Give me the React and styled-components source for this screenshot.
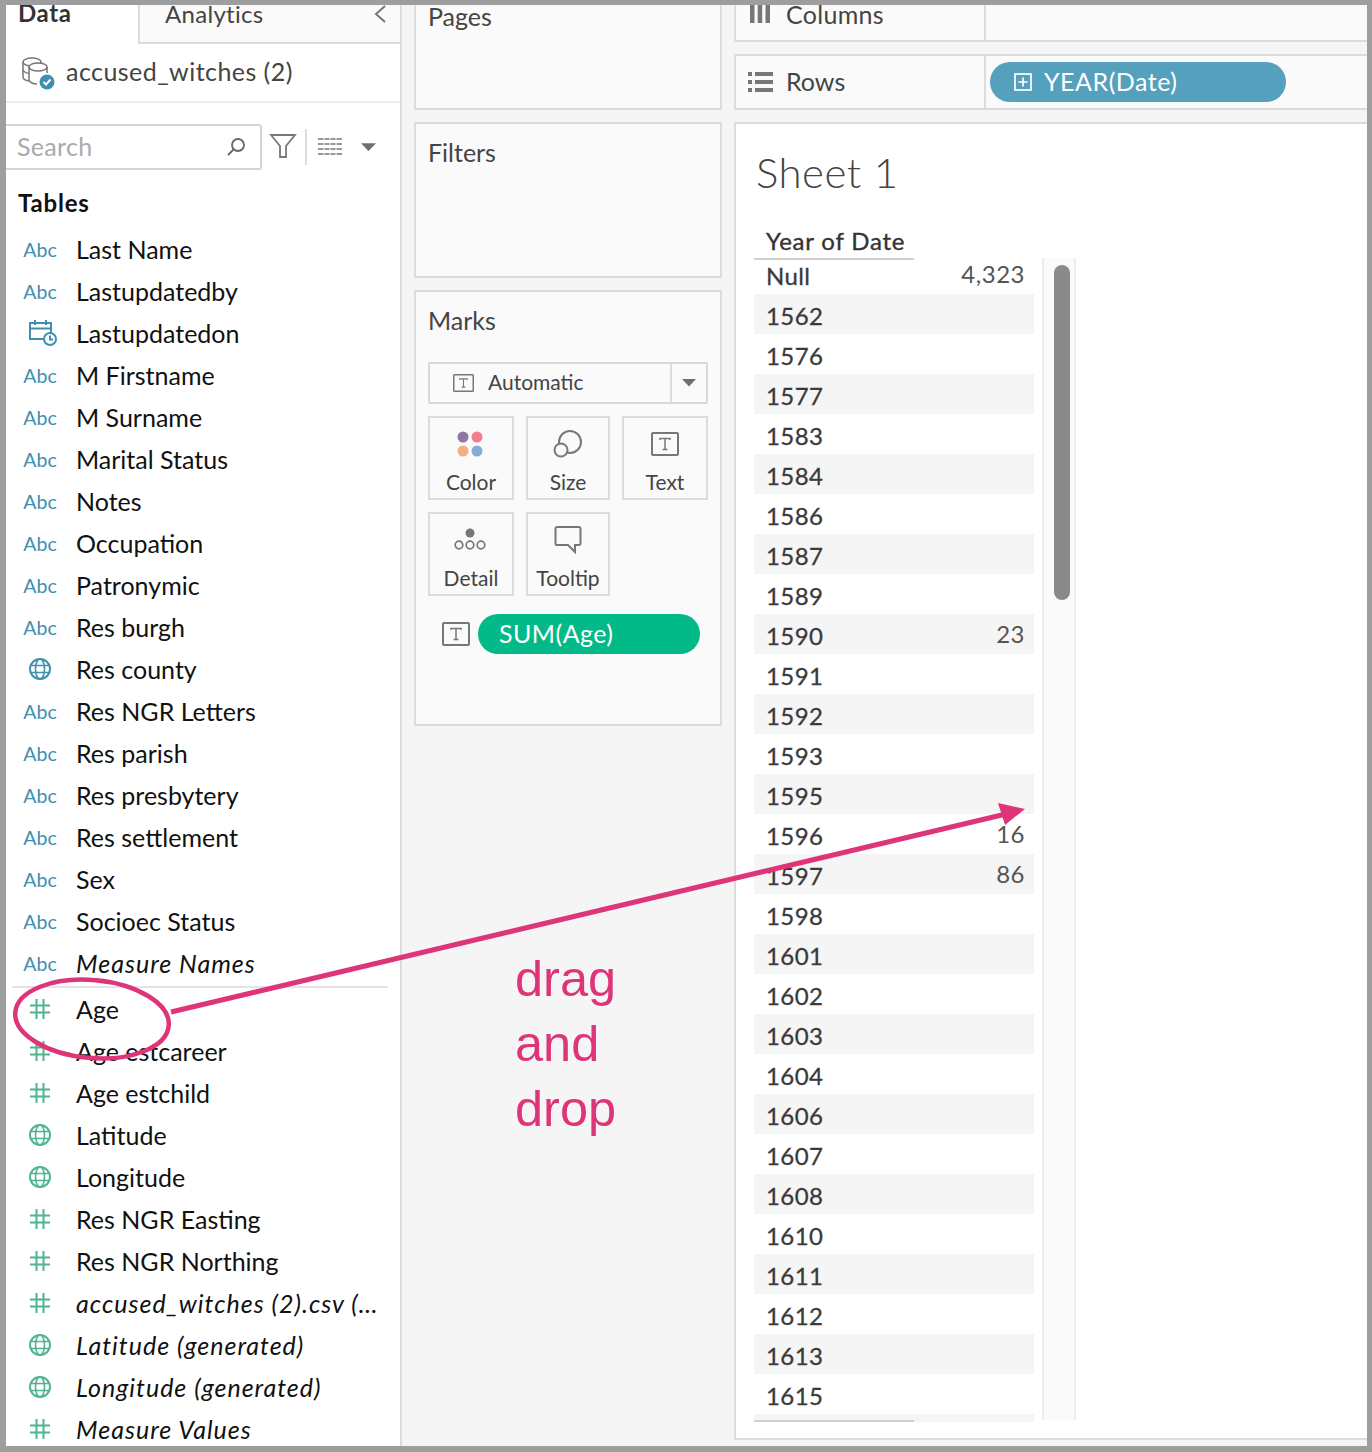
import styled, { createGlobalStyle } from "styled-components";

const GlobalStyle = createGlobalStyle`
  html, body { margin: 0; padding: 0; background: #fff; }
  * { box-sizing: border-box; }
`;

const FONT = `Lato, "Open Sans", sans-serif`;
const BLUE = "#3f8fae";
const GREEN = "#4fb58e";
const PINK = "#de3578";

const fields = [
  ["abc", "Last Name"], ["abc", "Lastupdatedby"], ["date", "Lastupdatedon"],
  ["abc", "M Firstname"], ["abc", "M Surname"], ["abc", "Marital Status"],
  ["abc", "Notes"], ["abc", "Occupation"], ["abc", "Patronymic"],
  ["abc", "Res burgh"], ["globeBlue", "Res county"], ["abc", "Res NGR Letters"],
  ["abc", "Res parish"], ["abc", "Res presbytery"], ["abc", "Res settlement"],
  ["abc", "Sex"], ["abc", "Socioec Status"], ["abc", "Measure Names", true],
];

const measures = [
  ["hash", "Age"], ["hash", "Age estcareer"], ["hash", "Age estchild"],
  ["globe", "Latitude"], ["globe", "Longitude"], ["hash", "Res NGR Easting"],
  ["hash", "Res NGR Northing"], ["hash", "accused_witches (2).csv (…", true],
  ["globe", "Latitude (generated)", true], ["globe", "Longitude (generated)", true],
  ["hash", "Measure Values", true],
];

const years = [
  ["Null", "4,323"], ["1562"], ["1576"], ["1577"], ["1583"], ["1584"], ["1586"], ["1587"],
  ["1589"], ["1590", "23"], ["1591"], ["1592"], ["1593"], ["1595"], ["1596", "16"],
  ["1597", "86"], ["1598"], ["1601"], ["1602"], ["1603"], ["1604"], ["1606"], ["1607"],
  ["1608"], ["1610"], ["1611"], ["1612"], ["1613"], ["1615"], [""],
];

function Globe({ color }) {
  return (
    <svg width="24" height="24" viewBox="0 0 24 24" fill="none" stroke={color} strokeWidth="1.6">
      <circle cx="12" cy="12" r="10" strokeWidth="2" />
      <ellipse cx="12" cy="12" rx="4.5" ry="10" />
      <path d="M3 8.5h18M3 15.5h18" />
    </svg>
  );
}

function Hash() {
  return (
    <svg width="22" height="22" viewBox="0 0 22 22" fill="none" stroke={GREEN} strokeWidth="2">
      <path d="M7.5 1v20M14.500 1v20M1 7.500h20M1 14.500h20" />
    </svg>
  );
}

function Calendar() {
  return (
    <CalendarSvg width="30" height="28" viewBox="0 0 30 28" fill="none" stroke={BLUE} strokeWidth="2">
      <path d="M15 20H2V4h21v10M2 9.500h21M7 1v5M18 1v5" />
      <circle cx="22" cy="20" r="6" fill="#fff" />
      <path d="M22 16.500V20.500h3" />
    </CalendarSvg>
  );
}

function FieldIcon({ kind }) {
  if (kind === "abc") return <AbcMark>Abc</AbcMark>;
  if (kind === "date") return <Calendar />;
  if (kind === "globeBlue") return <Globe color={BLUE} />;
  if (kind === "globe") return <Globe color={GREEN} />;
  return <Hash />;
}

function TBox({ w = 28, h = 24 }) {
  return (
    <svg width={w} height={h} viewBox="0 0 28 24" fill="none" stroke="#777" strokeWidth="2">
      <rect x="1" y="1" width="26" height="22" rx="1" />
      <path d="M9 8V6.500h10V8M14 6.500v11M11.500 17.500h5" strokeWidth="1.500" />
    </svg>
  );
}

function Caret({ size = 15 }) {
  return (
    <svg width={size} height={size * 0.55} viewBox="0 0 15 8" fill="#6f6f6f">
      <path d="M0 0h15L7.500 8z" />
    </svg>
  );
}

function Field({ kind, name, italic }) {
  return (
    <FieldRow>
      <IconSlot><FieldIcon kind={kind} /></IconSlot>
      <FieldName $italic={italic}>{name}</FieldName>
    </FieldRow>
  );
}

export default function App() {
  return (
    <>
      <GlobalStyle />
      <Frame>
        <Sidebar>
          <Tabs>
            <DataTab>Data</DataTab>
            <AnalyticsTab>
              Analytics
              <svg width="14" height="20" viewBox="0 0 14 20" fill="none" stroke="#777" strokeWidth="2">
                <path d="M12 2L3 10l9 8" />
              </svg>
            </AnalyticsTab>
          </Tabs>
          <Source>
            <svg width="34" height="34" viewBox="0 0 34 34" fill="none" stroke="#777" strokeWidth="1.500">
              <ellipse cx="11" cy="6" rx="9" ry="4" />
              <path d="M2 6v15c0 2 3 3.500 6 4M20 6v4" />
              <ellipse cx="17" cy="11" rx="9" ry="4" fill="#fff" />
              <path d="M8 11v13c0 2 4 4 8 4M26 11v6M2 14c1 2 3 3 6 3.500" />
              <circle cx="26" cy="26" r="7.500" fill={BLUE} stroke="none" />
              <path d="M22.500 26l2.500 2.500 4.500-5" stroke="#fff" strokeWidth="2" />
            </svg>
            <SourceName>accused_witches (2)</SourceName>
          </Source>
          <SearchRow>
            <SearchBox>
              <SearchHint>Search</SearchHint>
              <svg width="20" height="20" viewBox="0 0 20 20" fill="none" stroke="#666" strokeWidth="1.800">
                <circle cx="12" cy="8" r="6" />
                <path d="M7.500 12.500L2 18" />
              </svg>
            </SearchBox>
            <FunnelSvg width="28" height="26" viewBox="0 0 28 26" fill="none" stroke="#777" strokeWidth="1.800">
              <path d="M2 2h24L17 13v11h-6V13z" />
            </FunnelSvg>
            <ToolDivider />
            <svg width="26" height="20" viewBox="0 0 26 20" fill="none" stroke="#777" strokeWidth="1.500">
              <path d="M1 2h24M1 7h24M1 12h24M1 17h24" />
              <path d="M7 0v20M13 0v20M19 0v20" stroke="#fff" strokeWidth="1" />
            </svg>
            <CaretSlot><Caret /></CaretSlot>
          </SearchRow>
          <TablesTitle>Tables</TablesTitle>
          {fields.map(([kind, name, italic]) => <Field key={name} kind={kind} name={name} italic={italic} />)}
          <ListDivider />
          {measures.map(([kind, name, italic]) => <Field key={name} kind={kind} name={name} italic={italic} />)}
        </Sidebar>

        <Middle>
          <PagesCard>Pages</PagesCard>
          <FiltersCard>Filters</FiltersCard>
          <MarksCard>
            <MarksTitle>Marks</MarksTitle>
            <MarkSelect>
              <MarkSelectLabel><TBox w={21} h={18} /><span>Automatic</span></MarkSelectLabel>
              <MarkSelectCaret><Caret size={14} /></MarkSelectCaret>
            </MarkSelect>
            <MarkGrid>
              <MarkButton>
                <MarkIcon $left>
                  <svg width="28" height="28" viewBox="0 0 28 28">
                    <circle cx="7" cy="7" r="5.500" fill="#8f77a3" />
                    <circle cx="21" cy="7" r="5.500" fill="#f77c8b" />
                    <circle cx="7" cy="21" r="5.500" fill="#f3ae82" />
                    <circle cx="21" cy="21" r="5.500" fill="#86aed4" />
                  </svg>
                </MarkIcon>
                Color
              </MarkButton>
              <MarkButton>
                <MarkIcon>
                  <svg width="30" height="28" viewBox="0 0 30 28" fill="none" stroke="#777" strokeWidth="2">
                    <circle cx="17" cy="12" r="11" />
                    <circle cx="8" cy="20" r="6.500" fill="#fafafa" />
                  </svg>
                </MarkIcon>
                Size
              </MarkButton>
              <MarkButton>
                <MarkIcon><TBox /></MarkIcon>
                Text
              </MarkButton>
              <MarkButton>
                <MarkIcon $left>
                  <svg width="32" height="24" viewBox="0 0 32 24" fill="none" stroke="#777" strokeWidth="1.700">
                    <circle cx="16" cy="5" r="4.500" fill="#777" stroke="none" />
                    <circle cx="5" cy="17" r="3.800" />
                    <circle cx="16" cy="17" r="3.800" />
                    <circle cx="27" cy="17" r="3.800" />
                  </svg>
                </MarkIcon>
                Detail
              </MarkButton>
              <MarkButton>
                <MarkIcon>
                  <svg width="28" height="28" viewBox="0 0 28 28" fill="none" stroke="#777" strokeWidth="2">
                    <path d="M3 1h22a1.500 1.500 0 0 1 1.500 1.500v15a1.500 1.500 0 0 1-1.500 1.500h-4v7l-7-7H3a1.500 1.500 0 0 1-1.500-1.500v-15A1.500 1.500 0 0 1 3 1z" />
                  </svg>
                </MarkIcon>
                Tooltip
              </MarkButton>
            </MarkGrid>
            <PillRow>
              <TBox />
              <SumPill>SUM(Age)</SumPill>
            </PillRow>
          </MarksCard>
        </Middle>

        <Main>
          <ColumnsShelf>
            <ColumnsLabel>
              <svg width="20" height="18" viewBox="0 0 20 18" fill="#777">
                <path d="M0 0h4.500v18H0zM7.700 0h4.500v18H7.700zM15.500 0H20v18h-4.500z" />
              </svg>
              Columns
            </ColumnsLabel>
            <ShelfDrop />
          </ColumnsShelf>
          <RowsShelf>
            <ShelfLabel>
              <svg width="25" height="20" viewBox="0 0 25 20" fill="#777">
                <path d="M0 0h4v4H0zM7 0h18v4H7zM0 8h4v4H0zM7 8h18v4H7zM0 16h4v4H0zM7 16h18v4H7z" />
              </svg>
              <RowsWord>Rows</RowsWord>
            </ShelfLabel>
            <ShelfDrop>
              <YearPill>
                <svg width="18" height="18" viewBox="0 0 18 18" fill="none" stroke="#fff" strokeWidth="1.700">
                  <rect x="1" y="1" width="16" height="16" />
                  <path d="M9 4.500v9M4.500 9h9" />
                </svg>
                <span>YEAR(Date)</span>
              </YearPill>
            </ShelfDrop>
          </RowsShelf>
          <SheetPanel>
            <SheetTitle>Sheet 1</SheetTitle>
            <ColumnHeader>Year of Date</ColumnHeader>
            <TableArea>
              <Table>
                <TableBody>
                  {years.map(([year, value], i) => (
                    <YearRow key={i} $band={i % 2 === 1}>
                      <YearLabel>{year}</YearLabel>
                      <YearValue>{value}</YearValue>
                    </YearRow>
                  ))}
                </TableBody>
                <TableFoot />
              </Table>
              <ScrollTrack><ScrollThumb /></ScrollTrack>
            </TableArea>
          </SheetPanel>
        </Main>

        <Annotation width="1372" height="1452" viewBox="0 0 1372 1452" fill="none">
          <ellipse cx="92" cy="1019" rx="77" ry="39" transform="rotate(5 92 1019)" stroke={PINK} strokeWidth="4.500" />
          <path d="M171 1012L1006 814" stroke={PINK} strokeWidth="5" />
          <path d="M1025 809L998 803L1005 825Z" fill={PINK} />
        </Annotation>
        <DragNote>drag<br />and<br />drop</DragNote>
      </Frame>
    </>
  );
}

const Frame = styled.div`
  position: relative;
  width: 1372px;
  height: 1452px;
  overflow: hidden;
  display: grid;
  grid-template-columns: 396px 308px 633px;
  column-gap: 12px;
  background: #f5f5f5;
  border: solid #9e9e9e;
  border-width: 5px 5px 6px 6px;
  font-family: ${FONT};
  color: #444;
`;

const Sidebar = styled.div`
  height: 1441px;
  overflow: hidden;
  background: #fff;
  border-right: 2px solid #dcdcdc;
`;

const Tabs = styled.div`
  display: flex;
  height: 39px;
`;

const DataTab = styled.div`
  width: 132px;
  padding: 0 0 0 12px;
  margin-top: -4px;
  font-size: 24px;
  line-height: 24px;
  font-weight: 700;
  letter-spacing: 0.6px;
  color: #333;
`;

const AnalyticsTab = styled.div`
  flex: 1;
  display: flex;
  justify-content: space-between;
  align-items: flex-start;
  padding: 0 13px 0 25px;
  background: #fafafa;
  border-left: 2px solid #dcdcdc;
  border-bottom: 2px solid #dcdcdc;
  font-size: 24px;
  line-height: 18px;
  letter-spacing: 0.3px;
  color: #444;
  svg { margin-top: -1px; }
`;

const Source = styled.div`
  display: flex;
  align-items: center;
  gap: 11px;
  height: 59px;
  padding: 0 0 0 15px;
  border-bottom: 2px solid #ececec;
`;

const SourceName = styled.span`
  margin-top: -4px;
  font-size: 25px;
  letter-spacing: 0.45px;
  color: #444;
`;

const SearchRow = styled.div`
  display: flex;
  align-items: center;
  height: 46px;
  margin-top: 21px;
`;

const SearchBox = styled.div`
  width: 256px;
  height: 46px;
  display: flex;
  align-items: center;
  justify-content: space-between;
  padding: 0 14px 0 11px;
  margin-right: 7px;
  border: 2px solid #d4d4d4;
  border-left: none;
  border-radius: 0 3px 3px 0;
  color: #aaa;
`;

const SearchHint = styled.span`
  margin-top: -2px;
  font-size: 25px;
  letter-spacing: 0.3px;
`;

const FunnelSvg = styled.svg`
  margin-top: -2px;
`;

const ToolDivider = styled.div`
  width: 2px;
  height: 36px;
  margin: 0 10px 0 8px;
  background: #dcdcdc;
`;

const CaretSlot = styled.div`
  display: flex;
  margin-left: 18px;
`;

const TablesTitle = styled.div`
  margin: 18px 0 10px 12px;
  font-size: 24px;
  line-height: 30px;
  font-weight: 700;
  letter-spacing: 0.8px;
  color: #111;
`;

const FieldRow = styled.div`
  display: flex;
  align-items: center;
  height: 42px;
`;

const IconSlot = styled.div`
  flex: none;
  width: 70px;
  padding-right: 2px;
  display: flex;
  justify-content: center;
  align-items: center;
`;

const CalendarSvg = styled.svg`
  margin-left: 6px;
`;

const AbcMark = styled.span`
  font-size: 19.500px;
  color: ${BLUE};
`;

const FieldName = styled.span`
  font-size: 25px;
  color: #111;
  white-space: nowrap;
  font-style: ${(p) => (p.$italic ? "italic" : "normal")};
  letter-spacing: ${(p) => (p.$italic ? "1px" : "0")};
`;

const ListDivider = styled.div`
  height: 2px;
  margin: 2px 12px 0 6px;
  background: #e4e4e4;
`;

const Middle = styled.div`
  display: flex;
  flex-direction: column;
  gap: 12px;
`;

const Card = styled.div`
  background: #fafafa;
  border: 2px solid #dcdcdc;
  padding: 0 12px;
  font-size: 25px;
  color: #444;
`;

const PagesCard = styled(Card)`
  height: 105px;
  border-top: none;
  line-height: 23px;
`;

const FiltersCard = styled(Card)`
  height: 156px;
  line-height: 56px;
`;

const MarksCard = styled(Card)`
  height: 436px;
`;

const MarksTitle = styled.div`
  line-height: 56px;
  height: 70px;
`;

const MarkSelect = styled.div`
  display: flex;
  height: 42px;
  border: 2px solid #d8d8d8;
  border-radius: 2px;
`;

const MarkSelectLabel = styled.div`
  flex: 1;
  display: flex;
  align-items: center;
  gap: 14px;
  padding-left: 23px;
  border-right: 2px solid #dcdcdc;
  font-size: 21px;
  span { margin-top: -3px; }
`;

const MarkSelectCaret = styled.div`
  width: 34px;
  display: flex;
  align-items: center;
  justify-content: center;
`;

const MarkGrid = styled.div`
  display: grid;
  grid-template-columns: 86px 84px 86px;
  grid-auto-rows: 84px;
  column-gap: 12px;
  row-gap: 12px;
  margin-top: 12px;
`;

const MarkButton = styled.div`
  display: flex;
  flex-direction: column;
  align-items: center;
  border: 2px solid #dcdcdc;
  font-size: 21px;
  line-height: 24px;
  color: #444;
`;

const MarkIcon = styled.div`
  height: 52px;
  display: flex;
  align-items: center;
  justify-content: center;
  margin-right: ${(p) => (p.$left ? "3px" : "0")};
`;

const PillRow = styled.div`
  display: flex;
  align-items: center;
  gap: 8px;
  margin: 18px 0 0 14px;
`;

const SumPill = styled.div`
  width: 222px;
  height: 40px;
  padding-left: 21px;
  border-radius: 20px;
  background: #02ba88;
  color: #fff;
  font-size: 25px;
  line-height: 39px;
  letter-spacing: 0.45px;
`;

const Main = styled.div`
  display: flex;
  flex-direction: column;
  gap: 12px;
`;

const Shelf = styled.div`
  display: flex;
  background: #fafafa;
  border-bottom: 2px solid #dcdcdc;
  border-left: 2px solid #dcdcdc;
`;

const ColumnsShelf = styled(Shelf)`
  height: 37px;
`;

const RowsShelf = styled(Shelf)`
  height: 56px;
  border-top: 2px solid #dcdcdc;
`;

const ShelfLabel = styled.div`
  width: 250px;
  display: flex;
  align-items: center;
  gap: 13px;
  padding-left: 12px;
  border-right: 2px solid #dcdcdc;
  font-size: 25px;
  color: #444;
`;

const RowsWord = styled.span`
  margin-top: -2px;
`;

const ColumnsLabel = styled(ShelfLabel)`
  align-items: flex-start;
  gap: 16px;
  padding-left: 14px;
  line-height: 18px;
  letter-spacing: 0.3px;
`;

const ShelfDrop = styled.div`
  flex: 1;
  display: flex;
  align-items: center;
  padding-left: 4px;
`;

const YearPill = styled.div`
  width: 296px;
  height: 40px;
  display: flex;
  align-items: center;
  gap: 12px;
  padding-left: 24px;
  border-radius: 20px;
  background: #55a1bd;
  color: #fff;
  font-size: 25px;
  letter-spacing: 0.5px;
  span { margin-top: -2px; }
`;

const SheetPanel = styled.div`
  height: 1318px;
  padding: 23px 0 0 18px;
  background: #fff;
  border: solid #dcdcdc;
  border-width: 2px 0 2px 2px;
`;

const SheetTitle = styled.div`
  margin-left: 2px;
  font-size: 42px;
  line-height: 50px;
  font-weight: 300;
  letter-spacing: 0.5px;
  color: #444;
`;

const ColumnHeader = styled.div`
  width: 160px;
  height: 35px;
  margin-top: 28px;
  padding-left: 12px;
  border-bottom: 2px solid #d0d0d0;
  font-size: 24px;
  line-height: 31px;
  letter-spacing: 0.8px;
  -webkit-text-stroke: 0.35px #333;
  color: #333;
`;

const TableArea = styled.div`
  display: flex;
  gap: 8px;
`;

const Table = styled.div`
  width: 280px;
`;

const TableBody = styled.div`
  height: 1160px;
  overflow: hidden;
  > :first-child { margin-top: -6px; }
`;

const TableFoot = styled.div`
  height: 2px;
  background: #f5f5f5;
  &::before {
    content: "";
    display: block;
    width: 160px;
    height: 2px;
    background: #d0d0d0;
  }
`;

const YearRow = styled.div`
  display: flex;
  justify-content: space-between;
  align-items: flex-start;
  height: 40px;
  padding: 0 9px 0 12px;
  background: ${(p) => (p.$band ? "#f5f5f5" : "#fff")};
`;

const YearLabel = styled.span`
  margin-top: 8px;
  font-size: 24px;
  line-height: 28px;
  letter-spacing: 0.4px;
  -webkit-text-stroke: 0.3px #3a3a3a;
  color: #3a3a3a;
`;

const YearValue = styled.span`
  margin-top: 6px;
  font-size: 24px;
  line-height: 28px;
  letter-spacing: 0.5px;
  color: #555;
`;

const ScrollTrack = styled.div`
  width: 34px;
  height: 1162px;
  margin-top: -2px;
  background: #fafafa;
  border: solid #ececec;
  border-width: 0 2px;
`;

const ScrollThumb = styled.div`
  width: 16px;
  height: 335px;
  margin: 7px 0 0 10px;
  border-radius: 8px;
  background: #8a8a8a;
`;

const Annotation = styled.svg`
  position: absolute;
  left: -6px;
  top: -5px;
  pointer-events: none;
`;

const DragNote = styled.div`
  position: absolute;
  left: 509px;
  top: 941px;
  font-family: "Liberation Sans", Arial, sans-serif;
  font-size: 50.500px;
  line-height: 65px;
  color: ${PINK};
`;
